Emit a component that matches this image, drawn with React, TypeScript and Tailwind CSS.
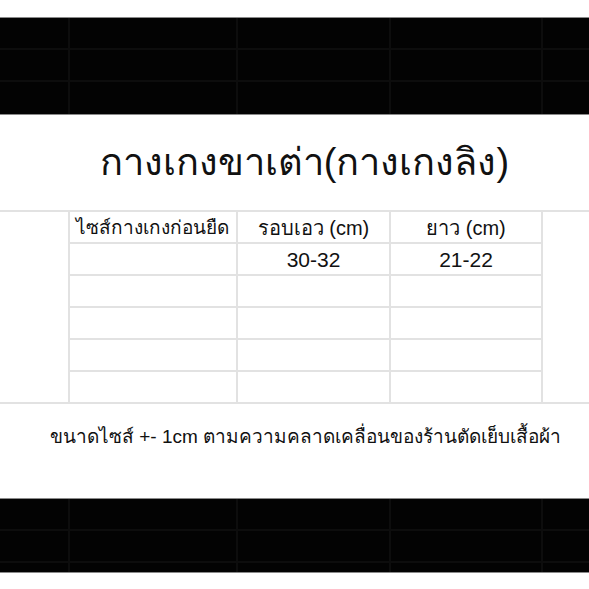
const thai = { fontFamily: '"Liberation Sans", "Noto Sans", "DejaVu Sans", sans-serif' };

function DarkBand({ heights }: { heights: number[] }) {
  return (
    <div className="border-y border-[#8a8a8a] bg-[#030303]">
      <div className="grid grid-cols-[68px_168px_153px_152px_1fr]">
        {heights.map((h, ri) =>
          [0, 1, 2, 3, 4].map((ci) => (
            <div
              key={`${ri}-${ci}`}
              className={`border-[#0d0d0d] ${ci ? "border-l-2" : ""} ${ri < heights.length - 1 ? "border-b-2" : ""}`}
              style={{ height: h }}
            />
          ))
        )}
      </div>
    </div>
  );
}

const rows = [
  ["ไซส์กางเกงก่อนยืด", "รอบเอว (cm)", "ยาว (cm)"],
  ["", "30-32", "21-22"],
  ["", "", ""],
  ["", "", ""],
  ["", "", ""],
  ["", "", ""],
];

export default function App() {
  return (
    <div className="w-[589px] h-[589px] bg-white text-[#111] overflow-hidden flex flex-col" style={thai}>
      <div className="h-[17px] shrink-0" />
      <DarkBand heights={[32, 32, 32]} />

      {/* title */}
      <div className="h-[95px] shrink-0 flex items-center justify-center pl-[20px] text-[38px] whitespace-nowrap">
        กางเกงขาเต่า(กางเกงลิง)
      </div>

      {/* table */}
      <div className="grid grid-cols-[68px_168px_153px_152px_1fr] border-y-2 border-[#e2e2e2] shrink-0">
        <div className="row-span-6" />
        {rows.map((r, ri) =>
          r.map((c, ci) => (
            <div
              key={`${ri}-${ci}`}
              className={`border-l-2 border-[#e2e2e2] flex items-center pt-[2px] whitespace-nowrap ${ri < 5 ? "h-[32px] border-b-2" : "h-[30px]"} ${ri === 0 ? (ci === 0 ? "text-[19px] justify-start pl-[6px]" : "text-[20px] justify-center") : "text-[21px] justify-center"}`}
            >
              {c}
            </div>
          ))
        )}
        <div className="row-span-6 col-start-5 row-start-1 border-l-2 border-[#e2e2e2]" />
      </div>

      {/* note */}
      <div className="h-[94px] shrink-0 flex items-center justify-center text-[19px] pb-[28px] pl-[22px] whitespace-nowrap">
        ขนาดไซส์ +- 1cm ตามความคลาดเคลื่อนของร้านตัดเย็บเสื้อผ้า
      </div>
      <DarkBand heights={[32, 32, 9]} />
    </div>
  );
}
